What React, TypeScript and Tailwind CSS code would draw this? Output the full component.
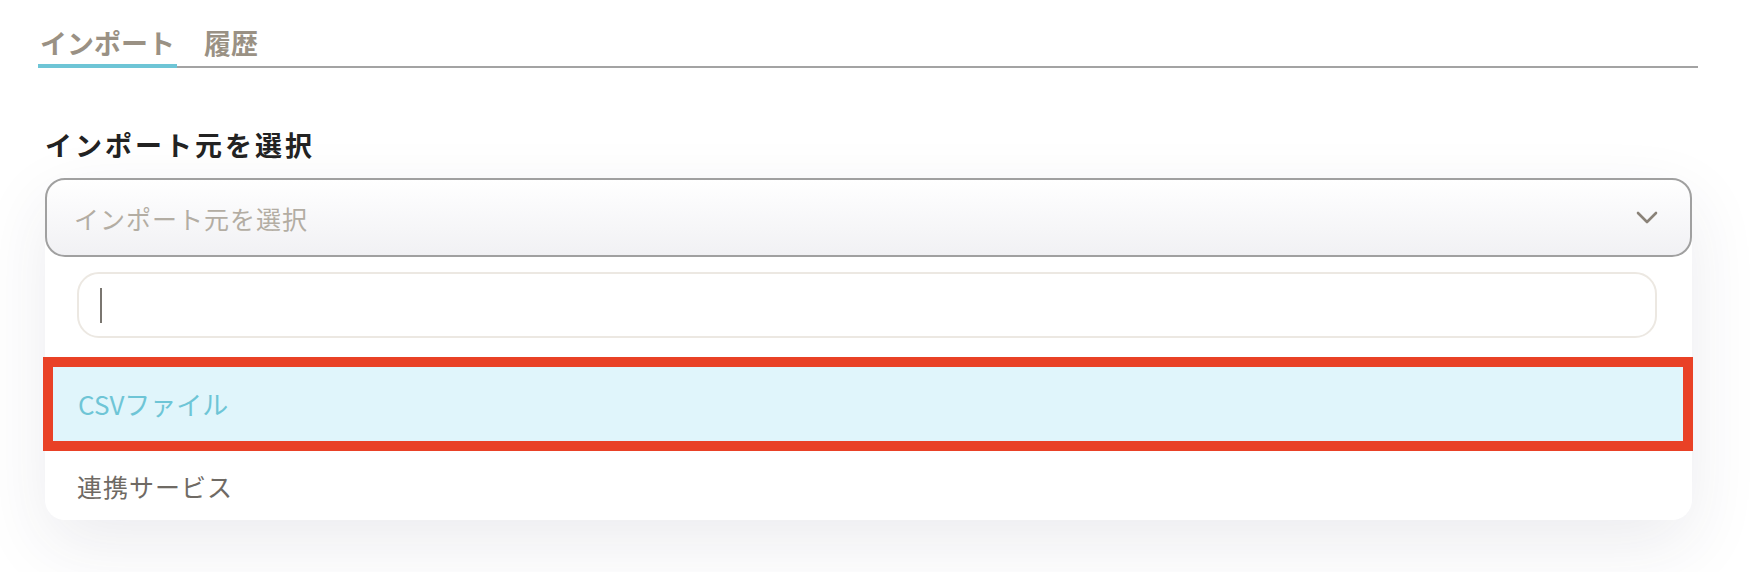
import React from "react";

export default function App() {
  return (
    <div
      className="w-[1750px] h-[572px] bg-white overflow-hidden pl-[38px] pt-[24px]"
      style={{ fontFamily: '"Noto Sans CJK JP", "Noto Sans", sans-serif' }}
    >
      {/* Tabs */}
      <div className="w-[1660px] flex items-end border-b-2 border-[#a3a3a3]">
        <div className="-mb-[2px] border-b-4 border-[#6ec5d6] pb-[2px] px-[2px] text-[27px] leading-[38px] font-bold text-[#9a9184]">
          インポート
        </div>
        <div className="ml-[27px] pb-[4px] text-[27px] leading-[38px] font-bold text-[#9a9184]">
          履歴
        </div>
      </div>

      {/* Section */}
      <div className="pl-[7px] w-[1654px]">
        <h2 className="mt-[57px] text-[27px] leading-[39px] font-bold text-[#222222] tracking-[3px]">
          インポート元を選択
        </h2>
        <div className="mt-[14px] shadow-[0_24px_70px_rgba(40,40,80,0.09)] rounded-[20px]">
          <div className="h-[79px] rounded-[20px] border-2 border-[#a0a0a0] bg-linear-to-b from-white to-[#f1f1f4] flex items-center justify-between pl-[27px] pr-[32px]">
            <span className="text-[25px] leading-[36px] text-[#b3ada3] tracking-[1px]">
              インポート元を選択
            </span>
            <svg width="22" height="13" viewBox="0 0 22 13" fill="none">
              <path d="M2 2L11 11L20 2" stroke="#8a8278" strokeWidth="2.6" strokeLinecap="round" strokeLinejoin="round" />
            </svg>
          </div>
          <div className="bg-white rounded-b-[22px] pt-[15px] pb-0">
            <div className="mx-[32px] mr-[35px] h-[66px] rounded-[22px] border-2 border-[#ece8e2] flex items-center pl-[21px]">
              <div className="w-[2px] h-[35px] bg-[#7a7670]" />
            </div>
            <div className="mt-[19px] -ml-[2px] -mr-[1px] h-[94px] border-[10px] border-[#e94126] bg-[#e0f5fb] flex items-center pl-[25px]">
              <span className="text-[26px] leading-[36px] text-[#6ec5d6]">CSVファイル</span>
            </div>
            <div className="h-[69px] flex items-center pl-[32px]">
              <span className="text-[25px] leading-[36px] text-[#6f6a64] tracking-[1px]">連携サービス</span>
            </div>
          </div>
        </div>
      </div>
    </div>
  );
}
